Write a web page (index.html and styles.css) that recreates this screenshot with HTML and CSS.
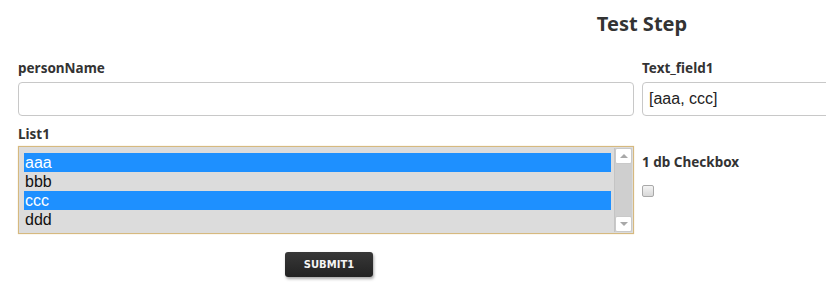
FILE: index.html
```html
<!DOCTYPE html>
<html>
<head>
<meta charset="utf-8">
<link rel="stylesheet" href="styles.css">
</head>
<body>
<div class="viewport">
<div class="page">
  <h1 class="title">Test Step</h1>
  <div class="grid">
    <div class="field">
      <label class="lbl">personName</label>
      <input class="text" type="text" value="">
    </div>
    <div class="field">
      <label class="lbl">Text_field1</label>
      <input class="text" type="text" value="[aaa, ccc]">
    </div>
    <div class="field">
      <label class="lbl">List1</label>
      <div class="listbox">
        <div class="options">
          <div class="opt sel">aaa</div>
          <div class="opt">bbb</div>
          <div class="opt sel">ccc</div>
          <div class="opt">ddd</div>
        </div>
        <div class="scrollbar">
          <div class="sbtn"><span class="arr up"></span></div>
          <div class="track"></div>
          <div class="sbtn"><span class="arr down"></span></div>
        </div>
      </div>
    </div>
    <div class="field cbfield">
      <label class="lbl">1 db Checkbox</label>
      <input class="cb" type="checkbox">
    </div>
  </div>
  <div class="actions">
    <button class="submit">SUBMIT1</button>
  </div>
</div>
</div>
</body>
</html>
```

FILE: styles.css
```css
html, body {
  margin: 0;
  padding: 0;
  overflow: hidden;
  background: #fff;
}
.viewport {
  width: 100vw;
  height: 100vh;
  overflow: hidden;
}
.page {
  width: 1248px;
  padding: 0 0 0 18px;
  font-family: "Noto Sans", "DejaVu Sans", sans-serif;
  color: #333;
}
.title {
  margin: 0;
  padding-top: 11px;
  text-align: center;
  font-size: 20px;
  line-height: 26px;
  font-weight: 700;
  color: #333;
}
.grid {
  display: grid;
  grid-template-columns: 616px 616px;
  column-gap: 8px;
  margin-top: 23px;
}
.field {
  display: flex;
  flex-direction: column;
}
.lbl {
  font-size: 13.5px;
  font-weight: 700;
  line-height: 16px;
  color: #333;
  margin-bottom: 6px;
}
.text {
  box-sizing: border-box;
  height: 34px;
  width: 100%;
  margin: 0 0 10px 0;
  border: 1px solid #c8c8c8;
  border-radius: 4px;
  padding: 0 6px;
  font-family: "Liberation Sans", Arial, sans-serif;
  font-size: 16px;
  color: #222;
  outline: none;
}
.field .lbl + .listbox { margin-top: -2px; }
.listbox {
  box-sizing: border-box;
  height: 88px;
  border: 1px solid #d6b97f;
  box-shadow: 0 0 1px #e6cf9f;
  background: #dcdcdc;
  display: flex;
  padding: 1px 1px 1px 0;
}
.options {
  flex: 1;
  padding: 5px 3px 0 5px;
  font-family: "Liberation Sans", Arial, sans-serif;
  font-size: 16px;
}
.opt {
  height: 19px;
  line-height: 19px;
  padding-left: 1px;
  color: #111;
}
.opt.sel {
  background: #1e90ff;
  color: #fff;
}
.scrollbar {
  width: 17px;
  display: flex;
  flex-direction: column;
  background: #cfcfcf;
  border-left: 1px solid #c4c4c4;
}
.sbtn {
  height: 14px;
  background: #fff;
  border: 1px solid #c9c9c9;
  border-radius: 2px;
  display: flex;
  align-items: center;
  justify-content: center;
}
.track { flex: 1; }
.arr {
  width: 0;
  height: 0;
  border-left: 4px solid transparent;
  border-right: 4px solid transparent;
}
.arr.up { border-bottom: 4px solid #a8a8a8; }
.arr.down { border-top: 4px solid #a8a8a8; }
.cbfield {
  padding-top: 28px;
}
.cbfield .lbl { margin-bottom: 15px; }
.cb {
  appearance: none;
  -webkit-appearance: none;
  width: 12px;
  height: 12px;
  margin: 0;
  border: 1px solid #a9a9a9;
  border-radius: 2px;
  background: linear-gradient(#f4f4f4, #d8d8d8);
}
.actions {
  padding: 17px 0 0 267px;
}
.submit {
  width: 88px;
  height: 25px;
  border: none;
  border-radius: 3px;
  background: linear-gradient(#383838, #222);
  box-shadow: 1px 2px 3px rgba(0,0,0,0.35);
  color: #f4f4f4;
  font-family: "DejaVu Sans", Verdana, sans-serif;
  font-weight: 700;
  font-size: 10px;
  padding: 0;
  cursor: pointer;
}
```
